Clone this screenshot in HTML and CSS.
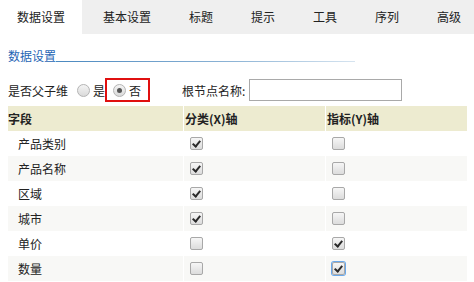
FILE: index.html
```html
<!doctype html>
<html lang="zh">
<head>
    <meta charset="UTF-8">
    <title>数据设置</title>
    <link rel="stylesheet" href="styles.css">
</head>
<body>
<div class="tabs">
    <div class="tab active">数据设置</div>
    <div class="tab">基本设置</div>
    <div class="tab">标题</div>
    <div class="tab">提示</div>
    <div class="tab">工具</div>
    <div class="tab">序列</div>
    <div class="tab">高级</div>
</div>
<div class="panel">
    <div class="section-title">
        <span class="title-text">数据设置</span>
        <span class="title-line"></span>
    </div>
    <div class="option-row">
        <span class="label">是否父子维</span>
        <span class="radio"></span><span class="radio-text">是</span>
        <span class="radio-box"><span class="radio on"></span><span class="radio-text">否</span></span>
        <span class="root-label">根节点名称:</span>
        <span class="text-input"></span>
    </div>
    <table class="grid">
        <tr class="head">
            <td class="name">字段</td>
            <td>分类(X)轴</td>
            <td>指标(Y)轴</td>
        </tr>
        <tr>
            <td class="name">产品类别</td>
            <td><span class="check on"></span></td>
            <td><span class="check"></span></td>
        </tr>
        <tr class="alt">
            <td class="name">产品名称</td>
            <td><span class="check on"></span></td>
            <td><span class="check"></span></td>
        </tr>
        <tr>
            <td class="name">区域</td>
            <td><span class="check on"></span></td>
            <td><span class="check"></span></td>
        </tr>
        <tr class="alt">
            <td class="name">城市</td>
            <td><span class="check on"></span></td>
            <td><span class="check"></span></td>
        </tr>
        <tr>
            <td class="name">单价</td>
            <td><span class="check"></span></td>
            <td><span class="check on"></span></td>
        </tr>
        <tr class="alt">
            <td class="name">数量</td>
            <td><span class="check"></span></td>
            <td><span class="check on focus"></span></td>
        </tr>
    </table>
</div>
</body>
</html>
```

FILE: styles.css
```css
body {
    margin: 0;
    padding: 0;
    background: #ffffff;
    font-family: "Noto Sans CJK SC", "Liberation Sans", sans-serif;
    font-size: 12px;
    color: #222222;
    overflow: hidden;
}
.tabs {
    display: flex;
    gap: 4px;
    height: 34px;
    background: #efefef;
    overflow: hidden;
}
.tab {
    flex-shrink: 0;
    white-space: nowrap;
    padding: 0 17px;
    line-height: 34px;
    color: #222222;
}
.tab.active {
    background: #ffffff;
}
.panel {
    padding: 0 8px;
}
.section-title {
    display: flex;
    align-items: flex-end;
    width: 347px;
    height: 29px;
}
.title-text {
    color: #1f66b5;
    line-height: 16px;
    margin-bottom: -1px;
    white-space: nowrap;
}
.title-line {
    flex: 1;
    height: 1px;
    margin-bottom: 1px;
    background: linear-gradient(90deg, #4a88bf 0%, #8fb5d6 60%, #d6e4f0 100%);
}
.option-row {
    display: flex;
    align-items: center;
    height: 24px;
    margin-top: 15px;
    white-space: nowrap;
}
.label {
    margin-right: 9px;
}
.radio {
    display: inline-block;
    width: 11px;
    height: 11px;
    border: 1px solid #b4b4b4;
    border-radius: 50%;
    background: linear-gradient(180deg, #f4f4f4 0%, #dadada 100%);
    position: relative;
    margin-right: 3px;
}
.radio.on::after {
    content: "";
    position: absolute;
    left: 3px;
    top: 3px;
    width: 5px;
    height: 5px;
    border-radius: 50%;
    background: #555555;
}
.radio-box {
    display: flex;
    align-items: center;
    height: 20px;
    padding: 0 7px 0 6px;
    margin-left: 0;
    border: 2px solid #e01010;
}
.root-label {
    margin-left: 32px;
    margin-right: 4px;
}
.text-input {
    width: 151px;
    height: 20px;
    border: 1px solid #a9a9a9;
    background: #ffffff;
}
.grid {
    width: 459px;
    border-collapse: collapse;
    margin-top: 4px;
}
.grid td {
    height: 25px;
    padding: 0 0 0 1px;
    vertical-align: middle;
    border-left: 1px solid #ffffff;
}
.grid td.name {
    width: 165px;
    padding-left: 10px;
    border-left: none;
}
.grid td:nth-child(2) {
    width: 140px;
}
.grid .head td {
    background: #edebd0;
    font-weight: bold;
}
.grid .head td.name {
    padding-left: 0;
}
.grid .alt td {
    background: #f8f8f6;
}
.check {
    display: block;
    width: 11px;
    height: 11px;
    margin-left: 5px;
    border: 1px solid #a8a8a8;
    border-radius: 2px;
    background: linear-gradient(180deg, #f6f6f6 0%, #dcdcdc 100%);
    position: relative;
}
.check.on::after {
    content: "";
    position: absolute;
    left: 3px;
    top: 1px;
    width: 3px;
    height: 6px;
    border: solid #2a2a2a;
    border-width: 0 2px 2px 0;
    transform: rotate(40deg);
}
.check.focus {
    box-shadow: 0 0 0 1px #68a8ec;
}
```
